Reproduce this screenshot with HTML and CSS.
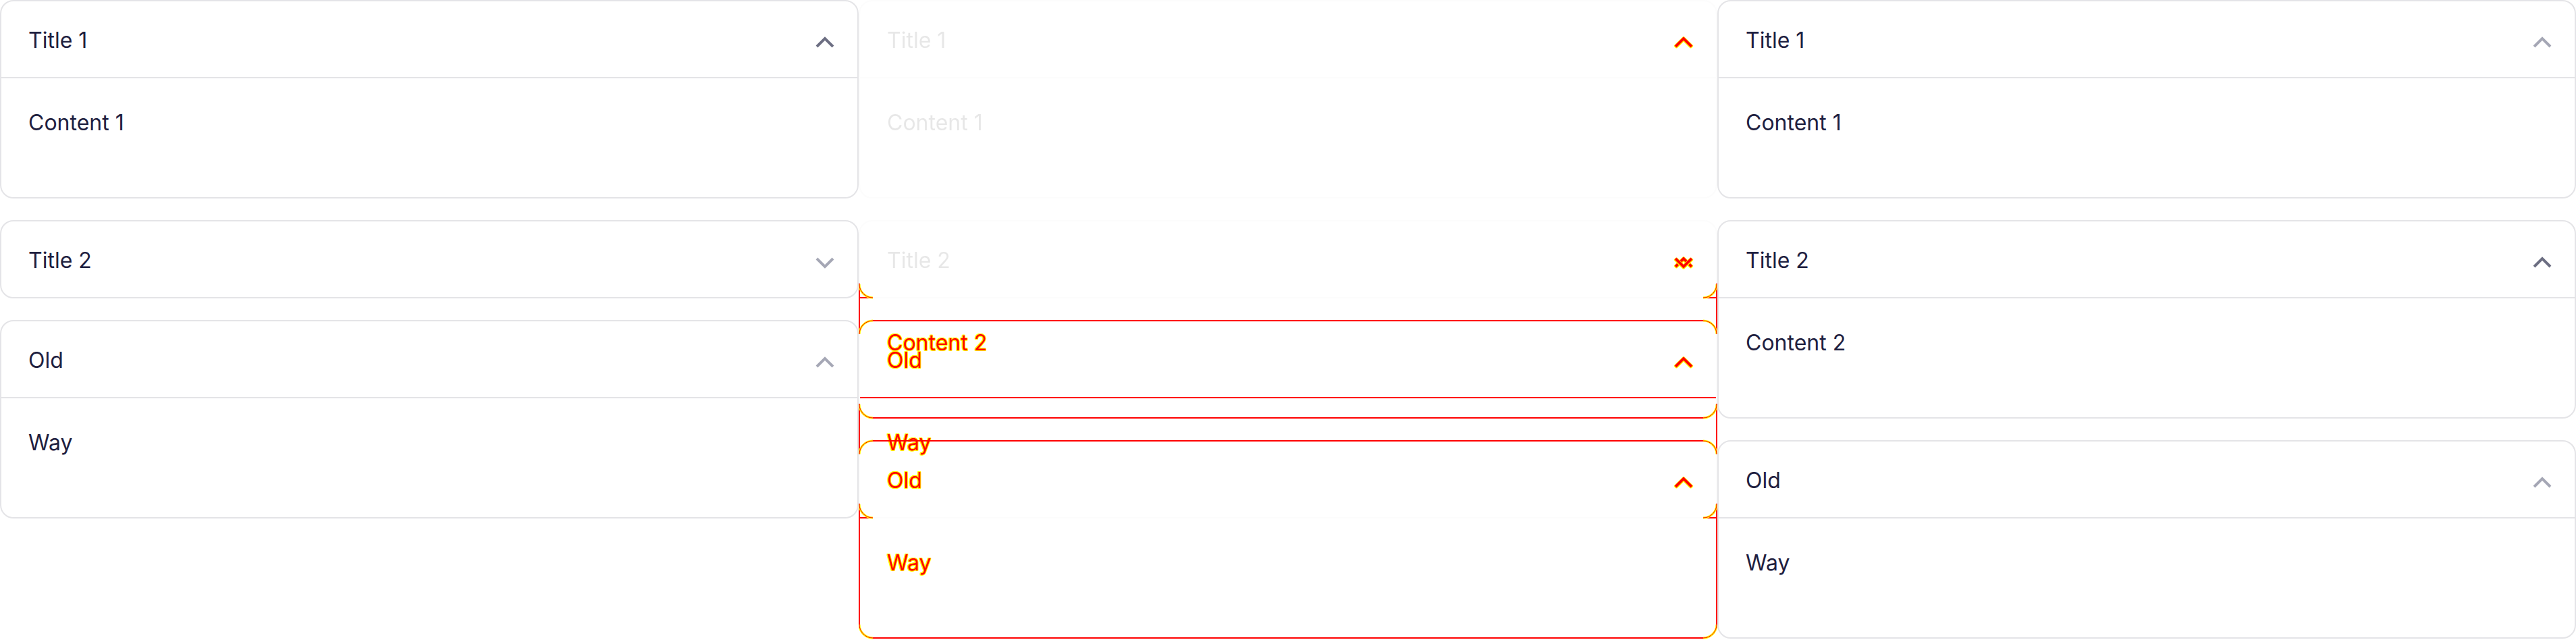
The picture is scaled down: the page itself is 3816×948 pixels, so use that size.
FILE: index.html
```html
<!DOCTYPE html>
<html lang="en">
<head>
<meta charset="utf-8">
<title>Accordion visual diff</title>
<link rel="stylesheet" href="styles.css">
</head>
<body>
<main class="diff">
  <!-- BEFORE -->
  <section class="shot">
    <div class="acc">
      <div class="item open">
        <div class="head"><span class="txt">Title 1</span><svg class="chev dark" viewBox="0 0 48 48"><path d="M12 30 24 18 36 30"/></svg></div>
        <div class="body"><span class="txt">Content 1</span></div>
      </div>
      <div class="item">
        <div class="head"><span class="txt">Title 2</span><svg class="chev" viewBox="0 0 48 48"><path d="M12 18 24 30 36 18"/></svg></div>
      </div>
      <div class="item open">
        <div class="head"><span class="txt">Old</span><svg class="chev" viewBox="0 0 48 48"><path d="M12 30 24 18 36 30"/></svg></div>
        <div class="body"><span class="txt">Way</span></div>
      </div>
    </div>
  </section>

  <!-- DIFF -->
  <section class="shot">
    <div class="acc ghost">
      <div class="item open">
        <div class="head"><span class="txt">Title 1</span><svg class="chev dark" viewBox="0 0 48 48"><path d="M12 30 24 18 36 30"/></svg></div>
        <div class="body"><span class="txt">Content 1</span></div>
      </div>
      <div class="item">
        <div class="head"><span class="txt">Title 2</span><svg class="chev" viewBox="0 0 48 48"><path d="M12 18 24 30 36 18"/></svg></div>
      </div>
      <div class="item open">
        <div class="head"><span class="txt">Old</span><svg class="chev" viewBox="0 0 48 48"><path d="M12 30 24 18 36 30"/></svg></div>
        <div class="body"><span class="txt">Way</span></div>
      </div>
    </div>

    <div class="acc phantom layer">
      <div class="item open">
        <div class="head"><span class="txt">Title 1</span><svg class="chev hit" viewBox="0 0 48 48"><path d="M12 30 24 18 36 30"/></svg></div>
        <div class="body"><span class="txt">Content 1</span></div>
      </div>
      <div class="item open">
        <div class="head"><span class="txt">Title 2</span><svg class="chev hit" viewBox="0 0 48 48"><path d="M12 30 24 18 36 30"/></svg></div>
        <div class="body"><span class="txt hit">Content 2</span></div>
      </div>
      <div class="item open">
        <div class="head"><span class="txt hit">Old</span><svg class="chev hit" viewBox="0 0 48 48"><path d="M12 30 24 18 36 30"/></svg></div>
        <div class="body"><span class="txt hit">Way</span></div>
      </div>
    </div>

    <div class="acc phantom layer">
      <div class="item open">
        <div class="head"><span class="txt">Title 1</span><svg class="chev" viewBox="0 0 48 48"><path d="M12 30 24 18 36 30"/></svg></div>
        <div class="body"><span class="txt">Content 1</span></div>
      </div>
      <div class="item">
        <div class="head"><span class="txt">Title 2</span><svg class="chev hit" viewBox="0 0 48 48"><path d="M12 18 24 30 36 18"/></svg></div>
      </div>
      <div class="item open">
        <div class="head"><span class="txt hit">Old</span><svg class="chev hit" viewBox="0 0 48 48"><path d="M12 30 24 18 36 30"/></svg></div>
        <div class="body"><span class="txt hit">Way</span></div>
      </div>
    </div>

    <svg class="marks layer" viewBox="0 0 1272 948" width="1272" height="948">
      <g class="red">
        <rect x="0" y="420" width="2" height="75"/>
        <rect x="1270" y="420" width="2" height="75"/>
        <rect x="0" y="598" width="2" height="75"/>
        <rect x="1270" y="598" width="2" height="75"/>
        <rect x="0" y="746" width="2" height="180"/>
        <rect x="1270" y="746" width="2" height="180"/>
        <rect x="0" y="440" width="21" height="2"/>
        <rect x="1251" y="440" width="21" height="2"/>
        <rect x="0" y="766" width="21" height="2"/>
        <rect x="1251" y="766" width="21" height="2"/>
        <rect x="21" y="474" width="1230" height="2"/>
        <rect x="2" y="588" width="1268" height="2"/>
        <rect x="21" y="618" width="1230" height="2"/>
        <rect x="21" y="652" width="1230" height="2"/>
        <rect x="21" y="944" width="1230" height="2"/>
      </g>
      <g class="aa">
        <path d="M1 421A20 20 0 0 0 21 441"/>
        <path d="M1271 421A20 20 0 0 1 1251 441"/>
        <path d="M1 495A20 20 0 0 1 21 475"/>
        <path d="M1271 495A20 20 0 0 0 1251 475"/>
        <path d="M1 599A20 20 0 0 0 21 619"/>
        <path d="M1271 599A20 20 0 0 1 1251 619"/>
        <path d="M1 673A20 20 0 0 1 21 653"/>
        <path d="M1271 673A20 20 0 0 0 1251 653"/>
        <path d="M1 747A20 20 0 0 0 21 767"/>
        <path d="M1271 747A20 20 0 0 1 1251 767"/>
        <path d="M1 925A20 20 0 0 0 21 945"/>
        <path d="M1271 925A20 20 0 0 1 1251 945"/>
      </g>
      <g class="aa-core">
        <path d="M1 421A20 20 0 0 0 21 441"/>
        <path d="M1271 421A20 20 0 0 1 1251 441"/>
        <path d="M1 495A20 20 0 0 1 21 475"/>
        <path d="M1271 495A20 20 0 0 0 1251 475"/>
        <path d="M1 599A20 20 0 0 0 21 619"/>
        <path d="M1271 599A20 20 0 0 1 1251 619"/>
        <path d="M1 673A20 20 0 0 1 21 653"/>
        <path d="M1271 673A20 20 0 0 0 1251 653"/>
        <path d="M1 747A20 20 0 0 0 21 767"/>
        <path d="M1271 747A20 20 0 0 1 1251 767"/>
        <path d="M1 925A20 20 0 0 0 21 945"/>
        <path d="M1271 925A20 20 0 0 1 1251 945"/>
      </g>
    </svg>
  </section>

  <!-- AFTER -->
  <section class="shot">
    <div class="acc">
      <div class="item open">
        <div class="head"><span class="txt">Title 1</span><svg class="chev" viewBox="0 0 48 48"><path d="M12 30 24 18 36 30"/></svg></div>
        <div class="body"><span class="txt">Content 1</span></div>
      </div>
      <div class="item open">
        <div class="head"><span class="txt">Title 2</span><svg class="chev dark" viewBox="0 0 48 48"><path d="M12 30 24 18 36 30"/></svg></div>
        <div class="body"><span class="txt">Content 2</span></div>
      </div>
      <div class="item open">
        <div class="head"><span class="txt">Old</span><svg class="chev" viewBox="0 0 48 48"><path d="M12 30 24 18 36 30"/></svg></div>
        <div class="body"><span class="txt">Way</span></div>
      </div>
    </div>
  </section>
</main>
</body>
</html>
```

FILE: styles.css
```css
html, body {
  margin: 0;
  padding: 0;
  background: #ffffff;
}

body {
  width: 3816px;
  height: 948px;
  overflow: hidden;
  font-family: Inter, "Noto Sans", sans-serif;
  color: #1e2040;
}

.diff {
  display: grid;
  grid-template-columns: repeat(3, 1272px);
}

.shot {
  position: relative;
  height: 948px;
}

.acc {
  display: flex;
  flex-direction: column;
  gap: 32px;
}

.item {
  border: 2px solid #e4e4e7;
  border-radius: 20px;
  background: #ffffff;
  overflow: hidden;
}

.head {
  box-sizing: border-box;
  display: flex;
  align-items: center;
  justify-content: space-between;
  height: 112px;
  padding: 3px 24px 0 40px;
  font-size: 32px;
  line-height: 48px;
}

.item.open .head {
  height: 114px;
  border-bottom: 2px solid #e4e4e7;
}

.body {
  height: 176px;
  box-sizing: border-box;
  padding: 42px 40px 0;
  font-size: 32px;
  line-height: 48px;
}

.chev {
  display: block;
  width: 48px;
  height: 48px;
  margin-top: 7px;
  fill: none;
  stroke: #a5a7b5;
  stroke-width: 4;
  stroke-linecap: butt;
  stroke-linejoin: miter;
}

.chev.dark {
  stroke: #6c6e82;
}

/* diff column */
.ghost {
  opacity: 0.1;
  filter: grayscale(1);
}

.layer {
  position: absolute;
  inset: 0;
}

.phantom .item {
  border-color: transparent;
  background: transparent;
}

.phantom .item.open .head {
  border-bottom-color: transparent;
}

.phantom .txt,
.phantom .chev {
  visibility: hidden;
}

.phantom .txt.hit {
  visibility: visible;
  color: #ff0000;
  text-shadow:
    1px 0 #ffff00, -1px 0 #ffff00, 0 1px #ffff00, 0 -1px #ffff00,
    1px 1px #ffff00, -1px -1px #ffff00, 1px -1px #ffff00, -1px 1px #ffff00;
}

.phantom .chev.hit {
  visibility: visible;
  stroke: #ff0000;
  filter: drop-shadow(1px 0 0 #ffff00) drop-shadow(-1px 0 0 #ffff00) drop-shadow(0 1px 0 #ffff00);
}

.marks .red rect {
  fill: #ff0000;
}

.marks .aa path {
  fill: none;
  stroke: #ffff00;
  stroke-width: 3;
}

.marks .aa-core path {
  fill: none;
  stroke: #ff0000;
  stroke-width: 1;
}
```
